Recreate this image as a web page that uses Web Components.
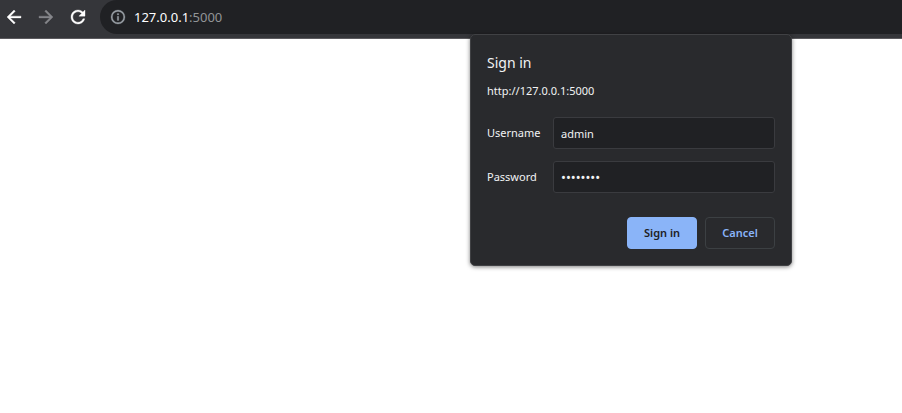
<!DOCTYPE html>
<html lang="en">
<head>
<meta charset="utf-8">
<title>127.0.0.1:5000</title>
<style>
html, body { height: 100%; }
body { margin: 0; background: #fff; font-family: "Noto Sans", "Open Sans", sans-serif; overflow: hidden; }
</style>
</head>
<body>
<browser-window>
  <browser-toolbar slot="toolbar">
    <nav-button slot="nav" icon="back" label="Back"></nav-button>
    <nav-button slot="nav" icon="forward" label="Forward" inactive></nav-button>
    <nav-button slot="nav" icon="reload" label="Reload"></nav-button>
    <address-bar slot="address" host="127.0.0.1" port=":5000"></address-bar>
  </browser-toolbar>
  <auth-dialog slot="overlay" heading="Sign in" origin="http://127.0.0.1:5000">
    <auth-field label="Username" type="text" value="admin"></auth-field>
    <auth-field label="Password" type="password" value="password"></auth-field>
    <action-button slot="actions" primary>Sign in</action-button>
    <action-button slot="actions">Cancel</action-button>
  </auth-dialog>
</browser-window>
<script>
const mount = (el, html) => { el.attachShadow({ mode: 'open' }).innerHTML = html; };

customElements.define('browser-window', class extends HTMLElement {
  constructor() {
    super();
    mount(this, `<style>
      :host { display: flex; flex-direction: column; min-height: 100%; position: relative; }
      main { flex: 1; background: #fff; }
    </style><slot name="toolbar"></slot><main></main><slot name="overlay"></slot>`);
  }
});

customElements.define('browser-toolbar', class extends HTMLElement {
  constructor() {
    super();
    mount(this, `<style>
      :host { display: flex; align-items: flex-start; gap: 8px; background: #35363a; padding-bottom: 4px; border-bottom: 1px solid #5b5a5e; overflow: hidden; }
      nav { display: flex; gap: 4px; }
      slot[name=address]::slotted(*) { flex: 1; }
    </style><nav><slot name="nav"></slot></nav><slot name="address"></slot>`);
  }
});

const ICONS = {
  back: 'M20 11H7.83l5.59-5.59L12 4l-8 8 8 8 1.41-1.41L7.83 13H20v-2z',
  forward: 'M12 4l-1.41 1.41L16.17 11H4v2h12.17l-5.58 5.59L12 20l8-8z',
  reload: 'M17.65 6.35C16.2 4.9 14.21 4 12 4c-4.42 0-7.99 3.58-7.99 8s3.57 8 7.99 8c3.73 0 6.84-2.55 7.73-6h-2.08c-.82 2.33-3.04 4-5.65 4-3.31 0-6-2.69-6-6s2.69-6 6-6c1.66 0 3.14.69 4.22 1.78L13 11h7V4l-2.35 2.35z'
};

customElements.define('nav-button', class extends HTMLElement {
  connectedCallback() {
    const off = this.hasAttribute('inactive');
    mount(this, `<style>
      :host { display: block; }
      button { display: grid; place-items: center; width: 28px; height: 34px; padding: 0; border: 0; background: none; color: #fff; }
      button:disabled { color: #85868a; }
      svg { width: 14px; height: 14px; fill: currentColor; stroke: currentColor; stroke-width: .4; overflow: visible; }
    </style><button type="button" aria-label="${this.getAttribute('label')}" ${off ? 'disabled' : ''}><svg viewBox="4 4 16 16" aria-hidden="true"><path d="${ICONS[this.getAttribute('icon')]}"/></svg></button>`);
  }
});

customElements.define('address-bar', class extends HTMLElement {
  connectedCallback() {
    mount(this, `<style>
      :host { display: flex; align-items: center; gap: 9px; height: 34px; box-sizing: border-box; padding-left: 11px; background: #202124; border-radius: 17px 0 0 17px; font-size: 13px; line-height: 20px; color: #fff; }
      svg { width: 14px; height: 14px; fill: #9aa0a6; stroke: #9aa0a6; stroke-width: .4; overflow: visible; }
      .port { color: #929497; }
    </style><svg viewBox="2 2 20 20" aria-hidden="true"><path d="M11 7h2v2h-2zm0 4h2v6h-2zm1-9a10 10 0 1 0 0 20 10 10 0 0 0 0-20zm0 18a8 8 0 1 1 0-16 8 8 0 0 1 0 16z"/></svg><span>${this.getAttribute('host')}<span class="port">${this.getAttribute('port')}</span></span>`);
  }
});

customElements.define('auth-dialog', class extends HTMLElement {
  connectedCallback() {
    mount(this, `<style>
      :host { position: absolute; top: 34px; left: 470px; width: 322px; box-sizing: border-box; padding: 16px; background: #292a2d; border: 1px solid #404144; border-radius: 5px; box-shadow: 0 1px 4px rgba(0,0,0,.5); color: #f1f3f4; font-size: 11px; line-height: 16px; }
      h1 { margin: 0 0 8px; font-size: 14px; font-weight: 400; line-height: 24px; }
      p { margin: 0 0 18px; }
      form { display: flex; flex-direction: column; gap: 12px; }
      footer { display: flex; justify-content: flex-end; gap: 8px; margin-top: 12px; }
    </style><h1>${this.getAttribute('heading')}</h1><p>${this.getAttribute('origin')}</p><form><slot></slot><footer><slot name="actions"></slot></footer></form>`);
  }
});

customElements.define('auth-field', class extends HTMLElement {
  connectedCallback() {
    mount(this, `<style>
      :host { display: grid; grid-template-columns: 66px 1fr; align-items: center; }
      input { min-width: 0; width: 100%; height: 32px; box-sizing: border-box; padding: 0 7px; border: 1px solid #3a3b3f; border-radius: 3px; background: #202124; color: #f1f3f4; font: inherit; outline: 0; }
      input[type=password] { font-size: 13px; }
    </style><label for="field">${this.getAttribute('label')}</label><input id="field" type="${this.getAttribute('type')}" value="${this.getAttribute('value')}">`);
  }
});

customElements.define('action-button', class extends HTMLElement {
  connectedCallback() {
    const primary = this.hasAttribute('primary');
    mount(this, `<style>
      :host { display: block; }
      button { width: 70px; height: 32px; padding: 0; border: 1px solid #3c4043; border-radius: 4px; background: none; color: #8ab4f8; font: inherit; font-weight: 600; white-space: nowrap; }
      .primary { border-color: #8ab4f8; background: #8ab4f8; color: #202124; }
    </style><button type="button" class="${primary ? 'primary' : ''}"><slot></slot></button>`);
  }
});
</script>
</body>
</html>
